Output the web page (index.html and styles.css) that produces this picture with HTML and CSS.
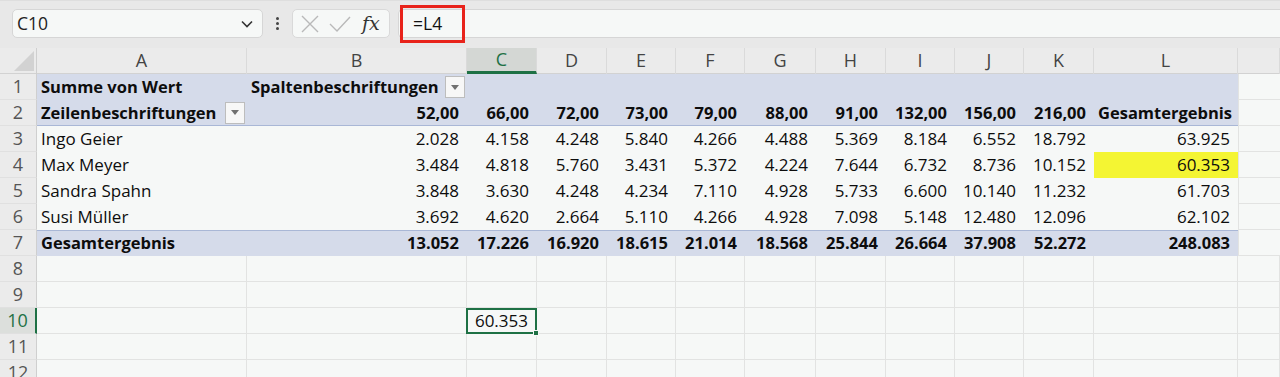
FILE: index.html
```html
<!DOCTYPE html>
<html lang="de">
<head>
<meta charset="utf-8">
<link rel="stylesheet" href="styles.css">
</head>
<body>
<div class="toolbar">
  <div class="namebox">
    <span class="namebox-text">C10</span>
    <svg class="chev" width="12" height="8" viewBox="0 0 12 8"><polyline points="1,1.5 6,6.5 11,1.5" fill="none" stroke="#333" stroke-width="1.6"/></svg>
  </div>
  <div class="dots"><i></i><i></i><i></i></div>
  <div class="fxbox">
    <svg width="20" height="20" viewBox="0 0 20 20"><path d="M2 2 L18 18 M18 2 L2 18" stroke="#b9b9b9" stroke-width="1.4" fill="none"/></svg>
    <svg width="24" height="20" viewBox="0 0 24 20"><polyline points="2,10 9,17 22,3" stroke="#b9b9b9" stroke-width="1.4" fill="none"/></svg>
    <span class="fx">fx</span>
  </div>
  <div class="formula">
    <span class="formula-text">=L4</span>
    <span class="redbox"></span>
  </div>
</div>

<div class="sheet">
  <div class="row hdr">
    <div class="corner"><span class="tri"></span></div>
    <div class="ch">A</div><div class="ch">B</div><div class="ch sel">C</div><div class="ch">D</div><div class="ch">E</div><div class="ch">F</div><div class="ch">G</div><div class="ch">H</div><div class="ch">I</div><div class="ch">J</div><div class="ch">K</div><div class="ch">L</div><div class="ch"></div>
  </div>

  <div class="row">
    <div class="rh">1</div>
    <div class="c pv b">Summe von Wert</div>
    <div class="c pv b split"><span>Spaltenbeschriftungen</span><span class="dd"></span></div>
    <div class="c pv"></div><div class="c pv"></div><div class="c pv"></div><div class="c pv"></div><div class="c pv"></div><div class="c pv"></div><div class="c pv"></div><div class="c pv"></div><div class="c pv"></div><div class="c pv"></div>
    <div class="c m"></div>
  </div>

  <div class="row">
    <div class="rh">2</div>
    <div class="c pv b split pvb"><span>Zeilenbeschriftungen</span><span class="dd"></span></div>
    <div class="c pv b r pvb">52,00</div><div class="c pv b r pvb">66,00</div><div class="c pv b r pvb">72,00</div><div class="c pv b r pvb">73,00</div><div class="c pv b r pvb">79,00</div><div class="c pv b r pvb">88,00</div><div class="c pv b r pvb">91,00</div><div class="c pv b r pvb">132,00</div><div class="c pv b r pvb">156,00</div><div class="c pv b r pvb">216,00</div><div class="c pv b r pvb">Gesamtergebnis</div>
    <div class="c m"></div>
  </div>

  <div class="row">
    <div class="rh">3</div>
    <div class="c d">Ingo Geier</div>
    <div class="c d r">2.028</div><div class="c d r">4.158</div><div class="c d r">4.248</div><div class="c d r">5.840</div><div class="c d r">4.266</div><div class="c d r">4.488</div><div class="c d r">5.369</div><div class="c d r">8.184</div><div class="c d r">6.552</div><div class="c d r">18.792</div><div class="c d r">63.925</div>
    <div class="c m"></div>
  </div>

  <div class="row">
    <div class="rh">4</div>
    <div class="c d">Max Meyer</div>
    <div class="c d r">3.484</div><div class="c d r">4.818</div><div class="c d r">5.760</div><div class="c d r">3.431</div><div class="c d r">5.372</div><div class="c d r">4.224</div><div class="c d r">7.644</div><div class="c d r">6.732</div><div class="c d r">8.736</div><div class="c d r">10.152</div><div class="c d r hl">60.353</div>
    <div class="c m"></div>
  </div>

  <div class="row">
    <div class="rh">5</div>
    <div class="c d">Sandra Spahn</div>
    <div class="c d r">3.848</div><div class="c d r">3.630</div><div class="c d r">4.248</div><div class="c d r">4.234</div><div class="c d r">7.110</div><div class="c d r">4.928</div><div class="c d r">5.733</div><div class="c d r">6.600</div><div class="c d r">10.140</div><div class="c d r">11.232</div><div class="c d r">61.703</div>
    <div class="c m"></div>
  </div>

  <div class="row">
    <div class="rh">6</div>
    <div class="c d">Susi Müller</div>
    <div class="c d r">3.692</div><div class="c d r">4.620</div><div class="c d r">2.664</div><div class="c d r">5.110</div><div class="c d r">4.266</div><div class="c d r">4.928</div><div class="c d r">7.098</div><div class="c d r">5.148</div><div class="c d r">12.480</div><div class="c d r">12.096</div><div class="c d r">62.102</div>
    <div class="c m"></div>
  </div>

  <div class="row">
    <div class="rh">7</div>
    <div class="c pv b pvt">Gesamtergebnis</div>
    <div class="c pv b r pvt">13.052</div><div class="c pv b r pvt">17.226</div><div class="c pv b r pvt">16.920</div><div class="c pv b r pvt">18.615</div><div class="c pv b r pvt">21.014</div><div class="c pv b r pvt">18.568</div><div class="c pv b r pvt">25.844</div><div class="c pv b r pvt">26.664</div><div class="c pv b r pvt">37.908</div><div class="c pv b r pvt">52.272</div><div class="c pv b r pvt">248.083</div>
    <div class="c m"></div>
  </div>

  <div class="row">
    <div class="rh">8</div>
    <div class="c g"></div><div class="c g"></div><div class="c g"></div><div class="c g"></div><div class="c g"></div><div class="c g"></div><div class="c g"></div><div class="c g"></div><div class="c g"></div><div class="c g"></div><div class="c g"></div><div class="c g"></div><div class="c g"></div>
  </div>

  <div class="row">
    <div class="rh">9</div>
    <div class="c g"></div><div class="c g"></div><div class="c g"></div><div class="c g"></div><div class="c g"></div><div class="c g"></div><div class="c g"></div><div class="c g"></div><div class="c g"></div><div class="c g"></div><div class="c g"></div><div class="c g"></div><div class="c g"></div>
  </div>

  <div class="row">
    <div class="rh rsel">10</div>
    <div class="c g"></div><div class="c g"></div><div class="c g r active">60.353<span class="handle"></span></div><div class="c g"></div><div class="c g"></div><div class="c g"></div><div class="c g"></div><div class="c g"></div><div class="c g"></div><div class="c g"></div><div class="c g"></div><div class="c g"></div><div class="c g"></div>
  </div>

  <div class="row">
    <div class="rh">11</div>
    <div class="c g"></div><div class="c g"></div><div class="c g"></div><div class="c g"></div><div class="c g"></div><div class="c g"></div><div class="c g"></div><div class="c g"></div><div class="c g"></div><div class="c g"></div><div class="c g"></div><div class="c g"></div><div class="c g"></div>
  </div>

  <div class="row">
    <div class="rh">12</div>
    <div class="c g"></div><div class="c g"></div><div class="c g"></div><div class="c g"></div><div class="c g"></div><div class="c g"></div><div class="c g"></div><div class="c g"></div><div class="c g"></div><div class="c g"></div><div class="c g"></div><div class="c g"></div><div class="c g"></div>
  </div>
</div>
</body>
</html>
```

FILE: styles.css
```css
* { box-sizing: border-box; }
html, body { margin: 0; padding: 0; }
body {
  width: 1280px;
  height: 377px;
  overflow: hidden;
  background: #f6f8f7;
  font-family: "Open Sans", "Noto Sans", sans-serif;
  font-size: 17px;
  color: #0d0d0d;
}

/* ---------- formula bar ---------- */
.toolbar {
  height: 48px;
  background: #e8e8e8;
  display: flex;
  align-items: flex-start;
  padding-top: 8px;
  border-top: 1px solid #dedede;
}
.namebox {
  margin-left: 12px;
  width: 251px;
  height: 29px;
  background: #f6f8f7;
  border: 1px solid #d6d6d6;
  border-radius: 5px;
  display: flex;
  align-items: center;
  justify-content: space-between;
  padding: 0 9px 0 4px;
}
.namebox-text { color: #222; line-height: 1; font-size: 17.5px; }
.chev { display: block; }
.dots {
  width: 29px;
  height: 29px;
  display: flex;
  flex-direction: column;
  align-items: center;
  justify-content: center;
  gap: 2px;
}
.dots i {
  display: block;
  width: 3px;
  height: 3px;
  border-radius: 50%;
  background: #444;
}
.fxbox {
  width: 98px;
  height: 29px;
  background: #f6f8f7;
  border: 1px solid #d9d9d9;
  border-radius: 5px;
  display: flex;
  align-items: center;
  padding-left: 7px;
  gap: 8px;
}
.fx {
  font-family: "DejaVu Serif", "Liberation Serif", serif;
  font-style: italic;
  font-size: 19px;
  color: #333;
  line-height: 1;
  margin-left: 2px;
}
.formula {
  position: relative;
  margin-left: 8px;
  flex: 1;
  height: 29px;
  background: #f6f8f7;
  border: 1px solid #d6d6d6;
  border-right: none;
  border-radius: 5px 0 0 5px;
  display: flex;
  align-items: center;
  padding-left: 14px;
}
.formula-text { color: #111; line-height: 1; font-size: 17.5px; }
.redbox {
  position: absolute;
  left: 1px;
  top: -5px;
  width: 65px;
  height: 38px;
  border: 3px solid #e8231b;
}

/* ---------- sheet ---------- */
.sheet { display: flex; flex-direction: column; }
.row {
  display: grid;
  grid-template-columns: 37px 210px 220px 70px 70px 69px 69px 71px 70px 69px 69px 70px 144px 1fr;
  height: 26px;
}
.hdr { background: #ebebeb; border-bottom: 1px solid #d2d2d2; }
.corner {
  position: relative;
  border-right: 1px solid #cfcfcf;
  display: flex;
  align-items: flex-end;
  justify-content: flex-end;
  padding: 0 2px 3px 0;
}
.tri {
  width: 0; height: 0;
  border-left: 20px solid transparent;
  border-bottom: 20px solid #d2d2d2;
}
.ch {
  border-right: 1px solid #dadada;
  text-align: center;
  line-height: 25px;
  color: #444;
  font-size: 18px;
  font-weight: 400;
}
.ch.sel {
  background: #d4d7d4;
  color: #1e7145;
  border-bottom: 3px solid #1e7145;
  line-height: 23px;
}
.rh {
  background: #ebebeb;
  border-right: 1px solid #cfcfcf;
  border-bottom: 1px solid #e0e0e0;
  text-align: center;
  line-height: 25px;
  font-size: 18px;
  color: #555;
}
.rh.rsel {
  background: #dcdfdc;
  color: #1e7145;
  border-right: 2px solid #1e7145;
}

.c {
  line-height: 26px;
  padding: 0 8px 0 4px;
  white-space: nowrap;
  overflow: visible;
}
.c.r { text-align: right; }
.c.b { font-weight: 700; font-size: 16.5px; }
.pv { background: #d5dbea; }
.pvb { border-bottom: 1px solid #a9b7d6; line-height: 25px; }
.pvt { border-top: 1px solid #a9b7d6; line-height: 24px; }
.d { background: #f6f8f7; }
.hl { background: #f4f533; }
.m { border-bottom: 1px solid #e2e3e2; border-left: 1px solid #e2e3e2; }
.g {
  border-right: 1px solid #e2e3e2;
  border-bottom: 1px solid #e2e3e2;
  line-height: 25px;
}
.split {
  display: flex;
  align-items: center;
  justify-content: space-between;
  padding-right: 2px;
}
.dd {
  width: 20px;
  height: 22px;
  background: #f7f7f7;
  border: 1px solid #bdbdbd;
  display: flex;
  align-items: center;
  justify-content: center;
}
.dd::after {
  content: "";
  width: 0; height: 0;
  border-left: 4px solid transparent;
  border-right: 4px solid transparent;
  border-top: 5px solid #707070;
}
.active {
  position: relative;
  border: 2px solid #1e7145;
  line-height: 22px;
  padding-right: 7px;
  margin-left: -1px;
}
.handle {
  position: absolute;
  right: -4px;
  bottom: -4px;
  width: 6px;
  height: 6px;
  background: #1e7145;
  border: 1px solid #f6f8f7;
}
```
